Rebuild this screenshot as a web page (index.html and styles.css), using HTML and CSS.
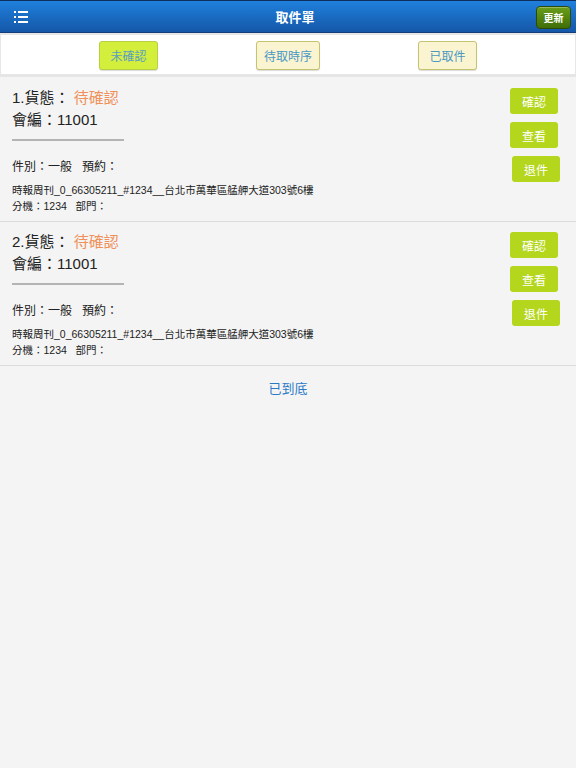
FILE: index.html
```html
<!DOCTYPE html>
<html lang="zh-Hant">
<head>
    <meta charset="UTF-8">
    <meta name="viewport" content="width=device-width, initial-scale=1.0">
    <title>取件單</title>
    <link rel="stylesheet" href="styles.css">
</head>
<body>

    <header class="topbar">
        <div class="menu-icon">
            <svg width="14" height="12" viewBox="0 0 14 12">
                <rect x="0" y="0" width="2" height="2" fill="#fff"/>
                <rect x="4" y="0" width="10" height="2" fill="#fff"/>
                <rect x="0" y="5" width="2" height="2" fill="#fff"/>
                <rect x="4" y="5" width="10" height="2" fill="#fff"/>
                <rect x="0" y="10" width="2" height="2" fill="#fff"/>
                <rect x="4" y="10" width="10" height="2" fill="#fff"/>
            </svg>
        </div>
        <div class="title">取件單</div>
        <button class="refresh-btn">更新</button>
    </header>

    <nav class="tabs">
        <button class="tab tab-short active">未確認</button>
        <button class="tab tab-long">待取時序</button>
        <button class="tab tab-short">已取件</button>
    </nav>

    <div class="list">
        <div class="order">
            <div class="order-info">
                <div class="order-head">1.貨態： <span class="status">待確認</span></div>
                <div class="order-head">會編：11001</div>
                <div class="divider"></div>
                <div class="order-type">件別：一般&nbsp;&nbsp;&nbsp;預約：</div>
                <div class="order-addr">時報周刊_0_66305211_#1234__台北市萬華區艋舺大道303號6樓</div>
                <div class="order-addr">分機：1234&nbsp;&nbsp;&nbsp;部門：</div>
            </div>
            <div class="order-actions">
                <button class="act-btn">確認</button>
                <button class="act-btn">查看</button>
                <button class="act-btn shift">退件</button>
            </div>
        </div>

        <div class="order">
            <div class="order-info">
                <div class="order-head">2.貨態： <span class="status">待確認</span></div>
                <div class="order-head">會編：11001</div>
                <div class="divider"></div>
                <div class="order-type">件別：一般&nbsp;&nbsp;&nbsp;預約：</div>
                <div class="order-addr">時報周刊_0_66305211_#1234__台北市萬華區艋舺大道303號6樓</div>
                <div class="order-addr">分機：1234&nbsp;&nbsp;&nbsp;部門：</div>
            </div>
            <div class="order-actions">
                <button class="act-btn">確認</button>
                <button class="act-btn">查看</button>
                <button class="act-btn shift">退件</button>
            </div>
        </div>

        <div class="list-end">已到底</div>
    </div>

</body>
</html>
```

FILE: styles.css
```css
body {
    margin: 0;
    background-color: #f4f4f4;
    font-family: "Liberation Sans", "Noto Sans CJK TC", sans-serif;
    color: #222;
}

button {
    font-family: inherit;
    cursor: pointer;
}

.topbar {
    height: 33px;
    box-sizing: border-box;
    display: flex;
    align-items: center;
    justify-content: space-between;
    padding: 0 5px 0 14px;
    background: linear-gradient(to bottom, #1f80dc, #1557a8);
    border-top: 1px solid #0e2f5c;
    border-bottom: 1px solid #123f7a;
}

.menu-icon {
    width: 40px;
    display: flex;
}

.title {
    color: #fff;
    font-size: 13px;
    font-weight: bold;
}

.refresh-btn {
    width: 35px;
    height: 23px;
    padding: 0;
    margin-top: 1px;
    border: 1px solid #2c4a08;
    border-radius: 4px;
    background: linear-gradient(to bottom, #6a9e1a, #3f6e08);
    color: #fff;
    font-size: 10px;
    font-weight: bold;
    box-shadow: inset 0 1px 0 rgba(255, 255, 255, 0.3);
}

.tabs {
    height: 38px;
    display: flex;
    align-items: center;
    justify-content: center;
    gap: 98px;
    background-color: #fff;
    border: 1px solid #e6e6e6;
    border-top-width: 2px;
    border-bottom-width: 3px;
    margin-bottom: 1px;
    padding-top: 1px;
}

.tab {
    height: 29px;
    padding: 0;
    border: 1px solid #c4c470;
    border-radius: 3px;
    background-color: #fbf4d0;
    color: #4a98c4;
    font-size: 12px;
    box-shadow: 0 1px 1px rgba(0, 0, 0, 0.15);
}

.tab-short {
    width: 59px;
}

.tab-long {
    width: 64px;
}

.tab.active {
    background-color: #d4ee3c;
    border-color: #b8d040;
    color: #5a9ec0;
}

.order {
    display: flex;
    justify-content: space-between;
    height: 143px;
    padding: 0 18px 0 12px;
    border-bottom: 1px solid #dcdcdc;
}

.order-info {
    padding-top: 9px;
}

.order-head {
    font-size: 15px;
    line-height: 22px;
}

.status {
    color: #f0915a;
}

.divider {
    width: 112px;
    height: 2px;
    background-color: #b4b4b4;
    margin: 8px 0 17px;
}

.order-type {
    font-size: 12px;
    line-height: 18px;
    margin-bottom: 6px;
}

.order-addr {
    font-size: 10.5px;
    line-height: 16px;
}

.order-actions {
    padding-top: 10px;
    display: flex;
    flex-direction: column;
    gap: 8px;
}

.act-btn {
    width: 48px;
    height: 26px;
    padding: 0;
    border: none;
    border-radius: 3px;
    background-color: #b4d61c;
    color: #fff;
    font-size: 12px;
}

.act-btn.shift {
    margin-left: 2px;
    margin-right: -2px;
}

.list-end {
    text-align: center;
    color: #2a7ac8;
    font-size: 13px;
    padding-top: 12px;
}
```
